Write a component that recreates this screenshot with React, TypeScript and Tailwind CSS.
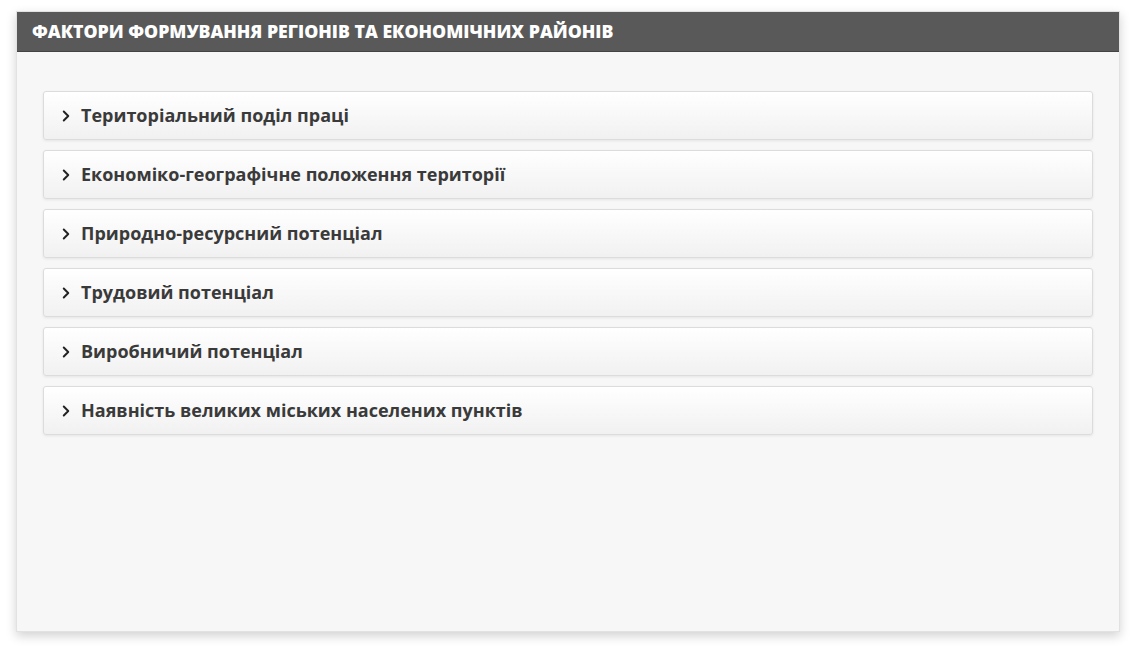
import { ChevronRight } from 'lucide-react'

const items = [
  'Територіальний поділ праці',
  'Економіко-географічне положення території',
  'Природно-ресурсний потенціал',
  'Трудовий потенціал',
  'Виробничий потенціал',
  'Наявність великих міських населених пунктів',
]

export default function App() {
  return (
    <div className="min-h-[653px] w-[1136px] bg-white pt-[11px] pl-[16px] font-['Open_Sans',sans-serif]">
      <div className="flex h-[621px] w-[1104px] flex-col bg-[#f7f7f7] shadow-[0_4px_10px_rgba(0,0,0,0.18)] border border-[#e2e2e2]">
        <div className="flex h-[40px] items-center bg-[#595959] px-[15px] border-b border-[#444]">
          <h1 className="text-[17.7px] font-extrabold uppercase tracking-[0px] text-white">
            Фактори формування регіонів та економічних районів
          </h1>
        </div>
        <div className="flex flex-col gap-[10px] px-[26px] pt-[39px]">
          {items.map((item) => (
            <div
              key={item}
              className="flex h-[49px] items-center gap-[6px] rounded-[3px] border border-[#dcdcdc] bg-gradient-to-b from-white to-[#f1f1f1] pl-[13px] shadow-[0_1px_3px_rgba(0,0,0,0.08)]"
            >
              <ChevronRight className="h-[18px] w-[18px] text-[#222]" strokeWidth={2.6} />
              <span className="text-[18px] font-bold text-[#3a3a3a]">{item}</span>
            </div>
          ))}
        </div>
      </div>
    </div>
  )
}
